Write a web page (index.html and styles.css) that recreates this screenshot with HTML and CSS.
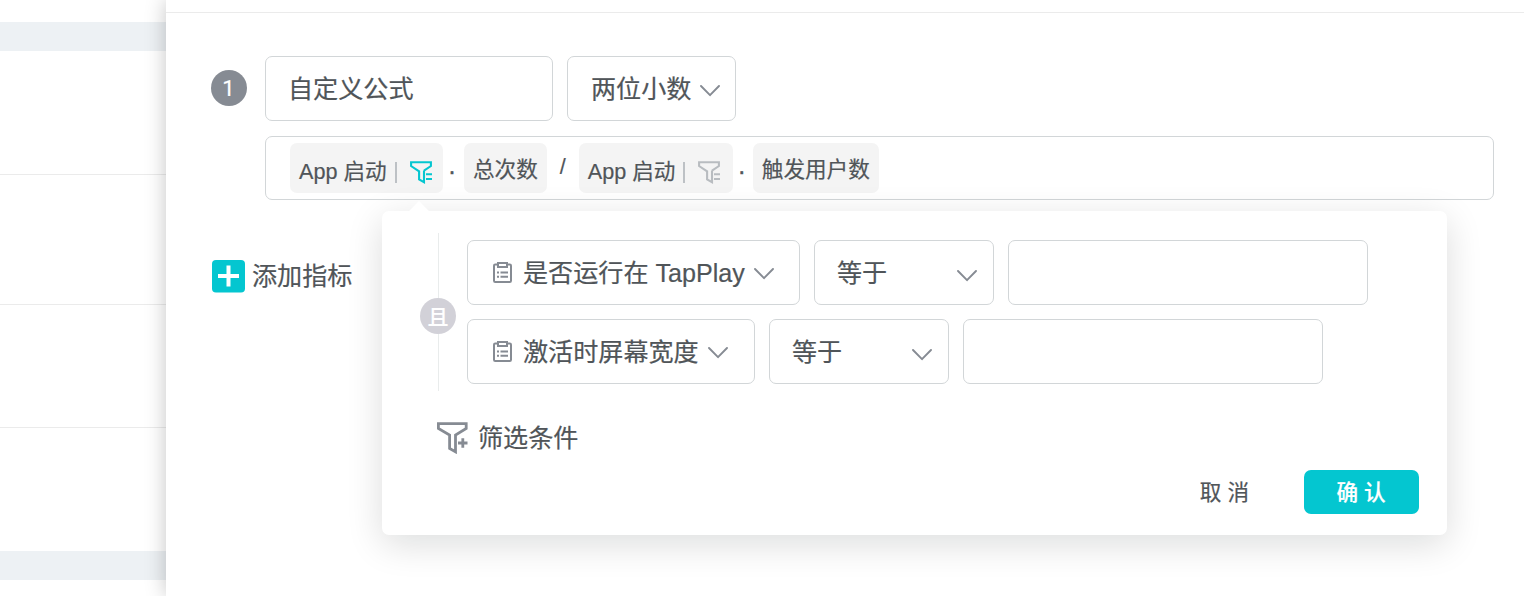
FILE: index.html
```html
<!DOCTYPE html>
<html lang="zh-CN">
<head>
<meta charset="utf-8">
<title>自定义公式</title>
<link rel="stylesheet" href="styles.css">
</head>
<body>
<svg class="sprite" aria-hidden="true">
  <symbol id="chevron" viewBox="0 0 20 12"><path d="M1 1l9 9.2L19 1" fill="none" stroke="currentColor" stroke-width="1.9" stroke-linecap="round" stroke-linejoin="round"/></symbol>
  <symbol id="filter" viewBox="0 0 22 23"><path d="M14 9.5V21.2L9.1 18.5V10.4L1.1 5V1.2H20.9V5L14 9.6" fill="none" stroke="currentColor" stroke-width="2.1"/><path d="M16 13.3h6M16 18h6" fill="none" stroke="currentColor" stroke-width="2"/></symbol>
  <symbol id="clipboard" viewBox="0 0 19 21"><path d="M4 2.6H2.2Q1 2.6 1 3.8v15Q1 20 2.2 20h14.6q1.2 0 1.2-1.2v-15q0-1.2-1.2-1.2H15" fill="none" stroke="currentColor" stroke-width="2"/><path d="M5 1h9v4H5z" fill="none" stroke="currentColor" stroke-width="2"/><path d="M4 10.5h2M7.5 10.5H15M4 14.8h2M7.5 14.8H15" stroke="currentColor" stroke-width="2"/></symbol>
</svg>
<div class="app">
  <aside class="backdrop">
    <div class="band band-first"></div>
    <div class="line line-a"></div>
    <div class="line line-b"></div>
    <div class="line line-c"></div>
    <div class="band band-last"></div>
  </aside>
  <main class="drawer">
    <header class="drawer-head"></header>
    <section class="metric">
      <span class="badge">1</span>
      <div class="metric-body">
        <div class="fields">
          <div class="box name">自定义公式</div>
          <div class="box precision">两位小数<svg class="chevron"><use href="#chevron"/></svg></div>
        </div>
        <div class="box formula">
          <span class="tag event">App 启动<i class="bar"></i><svg class="filter active"><use href="#filter"/></svg></span>
          <span class="dot">.</span>
          <span class="tag">总次数</span>
          <span class="slash">/</span>
          <span class="tag event second">App 启动<i class="bar"></i><svg class="filter"><use href="#filter"/></svg></span>
          <span class="dot dot-second">.</span>
          <span class="tag">触发用户数</span>
        </div>
      </div>
      <div class="popover">
        <div class="conditions">
          <div class="relation"><span class="relation-badge">且</span></div>
          <div class="condition-list">
            <div class="condition">
              <div class="box property"><svg class="clipboard"><use href="#clipboard"/></svg><span>是否运行在 TapPlay</span><svg class="chevron"><use href="#chevron"/></svg></div>
              <div class="box operator">等于<svg class="chevron"><use href="#chevron"/></svg></div>
              <div class="box value"></div>
            </div>
            <div class="condition">
              <div class="box property short"><svg class="clipboard"><use href="#clipboard"/></svg><span>激活时屏幕宽度</span><svg class="chevron"><use href="#chevron"/></svg></div>
              <div class="box operator">等于<svg class="chevron"><use href="#chevron"/></svg></div>
              <div class="box value"></div>
            </div>
          </div>
        </div>
        <div class="add-filter">
          <svg class="filter-add" viewBox="0 0 31 32"><path d="M1.4 1.6h27.8v4.9L18.5 13v16.8l-5.9-3.4V13L1.4 6.5z" fill="none" stroke="currentColor" stroke-width="2.8"/><path d="M21 21h9.5M25.8 16.3v9.4" stroke="currentColor" stroke-width="2.8"/></svg>
          <span>筛选条件</span>
        </div>
        <div class="actions"><span class="cancel">取 消</span><span class="confirm">确 认</span></div>
      </div>
    </section>
    <div class="add-metric">
      <svg class="plus" viewBox="0 0 33 33"><rect width="33" height="32.5" rx="4" fill="#04c6d0"/><path d="M6 16h21M16.5 5.5v21" stroke="#fff" stroke-width="4"/></svg>
      <span>添加指标</span>
    </div>
  </main>
</div>
</body>
</html>
```
FILE: styles.css
```css
* { box-sizing: border-box; }
body {
  margin: 0;
  overflow: hidden;
  background: #fff;
  color: #505559;
  font: 25.1px/1 "Liberation Sans", "Noto Sans CJK SC", sans-serif;
  -webkit-text-stroke: .2px currentColor;
  white-space: nowrap;
}
svg { display: block; flex: none; }
.sprite { position: absolute; width: 0; height: 0; }
.app { display: flex; height: 596px; }

.backdrop { width: 166px; flex: none; }
.band { height: 29px; background: #edf1f4; }
.band-first { margin-top: 22px; }
.band-last { margin-top: 123px; }
.line { height: 1px; background: #ebebeb; }
.line-a { margin-top: 123px; }
.line-b { margin-top: 129px; }
.line-c { margin-top: 122px; }

.drawer { flex: 1; background: #fff; box-shadow: 0 0 20px rgba(0, 0, 0, .23); }
.drawer-head { height: 13px; border-bottom: 1px solid #ebebeb; }
.metric { position: relative; display: flex; padding: 43px 30px 0 45px; }
.badge {
  width: 36px; height: 36px; margin: 14px 18px 0 0; padding: 2px 1px 0 0; flex: none;
  display: grid; place-items: center;
  border-radius: 50%; background: #868b93; color: #fff; font: 22px/1 Roboto, sans-serif;
}
.metric-body { flex: 1; }
.box { display: flex; align-items: center; height: 65px; padding-top: 2px; border: 1px solid #d2d6d8; border-radius: 7px; background: #fff; }
.fields { display: flex; gap: 14px; margin-bottom: 15px; }
.name { width: 288px; padding-left: 22px; }
.precision { width: 169px; padding-left: 23px; }
.chevron { width: 20px; height: 12px; margin: 3px 0 0 9px; color: #868b93; }
.formula { height: 64px; padding: 0 0 0 24px; font-size: 21.6px; }
.tag { display: flex; align-items: center; height: 50px; padding: 4px 9px 0; border-radius: 7px; background: #f4f4f4; }
.event { width: 153px; padding: 8px 0 0 9px; }
.second { width: 154px; }
.bar { width: 2px; height: 21px; margin: 1px 13px 0 8px; background: #bdc1c5; }
.filter { width: 22px; height: 23px; color: #b8bcc0; }
.active { color: #04c6d0; }
.dot { width: 21px; margin-top: -3px; padding-left: 6px; -webkit-text-stroke-width: .7px; }
.dot-second { width: 20px; }
.slash { width: 32px; margin-top: -2px; padding-left: 13px; }

.popover {
  position: absolute; left: 216px; top: 198px;
  width: 1065px; height: 324px; padding: 22px 28px 0 38px;
  border-radius: 7px; background: #fff;
  box-shadow: 0 9px 36px rgba(0, 15, 12, .14);
}
.popover::before {
  content: ""; position: absolute; left: 30px; top: -7px;
  width: 14px; height: 14px; background: #fff; transform: rotate(45deg);
}
.conditions { display: flex; height: 158px; }
.relation { width: 47px; padding-top: 65px; background: linear-gradient(#e9ecec, #e9ecec) 18px 0 / 1px 100% no-repeat; }
.relation-badge {
  width: 36px; height: 36px; display: grid; place-items: center;
  border-radius: 50%; background: #d2d1d8; color: #fff; font-size: 21px; font-weight: 500;
}
.condition-list { display: grid; gap: 14px; padding-top: 7px; align-content: start; }
.condition { display: flex; gap: 14px; }
.property { width: 333px; padding-left: 25px; }
.property .chevron { margin-top: 1px; }
.short { width: 288px; }
.clipboard { width: 19px; height: 21px; margin: -2px 11px 0 0; color: #868b93; }
.operator { width: 180px; padding: 2px 16px 0 22px; justify-content: space-between; }
.operator .chevron { margin-top: 4px; }
.value { width: 360px; }
.add-filter { display: flex; align-items: center; gap: 10px; height: 33px; margin: 30px 0 0 17px; }
.add-filter span { padding-top: 2px; }
.filter-add { width: 31px; height: 32px; color: #868b93; }
.actions { display: flex; justify-content: flex-end; align-items: center; margin-top: 16px; font-size: 21.6px; }
.cancel { margin-right: 55px; padding-top: 2px; }
.confirm { width: 115px; height: 44px; padding: 2px 1px 0 0; display: grid; place-items: center; border-radius: 7px; background: #04c6d0; color: #fff; font-weight: 500; }
.add-metric { display: flex; align-items: center; gap: 7px; margin: 60px 0 0 46px; }
.plus { width: 33px; height: 33px; }
```
